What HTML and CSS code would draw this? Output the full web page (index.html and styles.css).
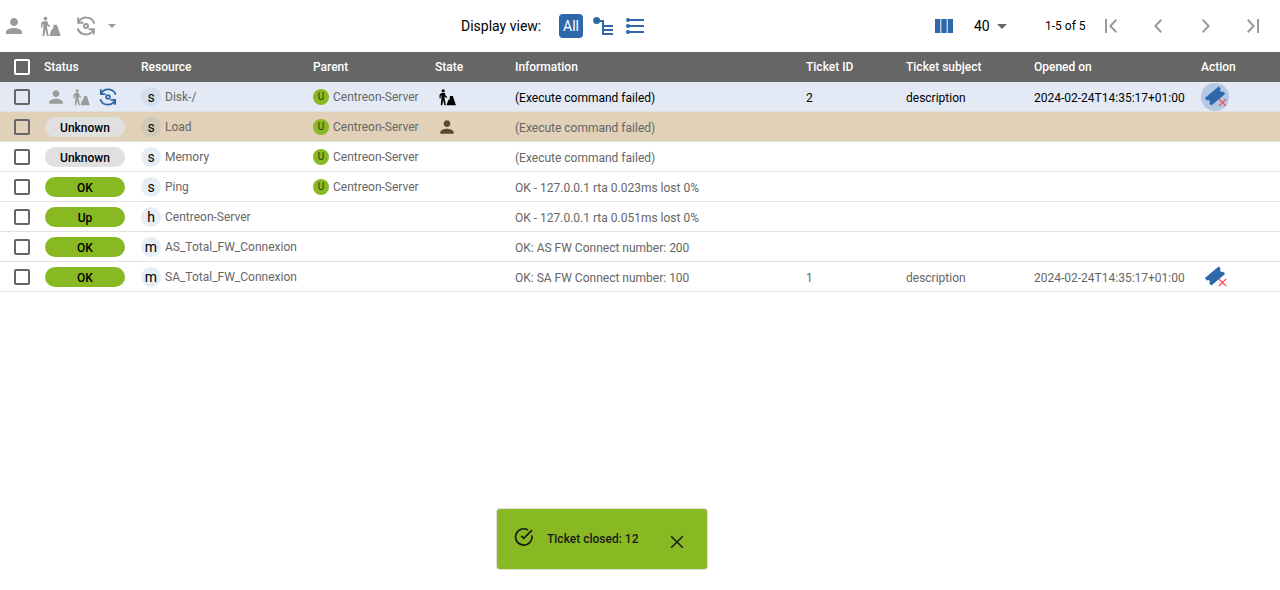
FILE: index.html
```html
<!DOCTYPE html>
<html lang="en">
<head>
    <meta charset="UTF-8">
    <title>Resources status</title>
    <link rel="stylesheet" href="styles.css">
</head>
<body>
    <svg class="defs" width="0" height="0">
        <symbol id="i-person" viewBox="0 0 24 24"><path d="M12 12c2.21 0 4-1.79 4-4s-1.79-4-4-4-4 1.79-4 4 1.79 4 4 4zm0 2c-2.67 0-8 1.34-8 4v2h16v-2c0-2.66-5.33-4-8-4z"/></symbol>
        <symbol id="i-downtime" viewBox="0 0 24 24"><circle cx="7.4" cy="4.6" r="1.9"/><path d="M5 7.2h4.4l1 3.2 2 1.7-.9 1-2.4-1.6v2.2l1.6 8.3H9l-1.6-6.2-1.1 6.2H4.5l.9-9.2V10l-.9.6v3H3V9.3z"/><path d="M15.6 10.8h3.4l3.7 11.2H11.4l2.2-6.4 1.4-.6z"/></symbol>
        <symbol id="i-recheck" viewBox="0 0 24 24"><path class="line" d="M4.2 3.6v5.2h5.2M4.4 8.6A8.6 8.6 0 0 1 20.4 9.6M19.8 20.4v-5.2h-5.2M19.6 15.4A8.6 8.6 0 0 1 3.6 14.4"/><circle class="line" cx="12" cy="12" r="2"/></symbol>
        <symbol id="i-ticket" viewBox="0 0 24 24"><path transform="rotate(-40 12 12)" d="M3 7h18v3.2a1.8 1.8 0 0 0 0 3.6V17H3v-3.2a1.8 1.8 0 0 0 0-3.6z"/></symbol>
        <symbol id="i-cross" viewBox="0 0 10 10"><path d="M1 1l8 8M9 1l-8 8"/></symbol>
    </svg>

    <header class="toolbar">
        <div class="actions">
            <svg class="icon muted"><use href="#i-person"/></svg>
            <svg class="icon muted downtime-btn"><use href="#i-downtime"/></svg>
            <svg class="icon muted recheck-btn"><use href="#i-recheck"/></svg>
            <span class="caret muted-caret"></span>
        </div>
        <div class="views">
            <span class="views-label">Display view:</span>
            <button class="all-btn">All</button>
            <svg class="tree-icon" viewBox="0 0 20 18">
                <circle cx="3.6" cy="3.6" r="3.5"/>
                <path d="M4 3h7v15H9V5H4zM10 8h10v2H10zM10 12h10v2H10zM10 16h10v2H10z"/>
            </svg>
            <svg class="list-icon" viewBox="0 0 18 16">
                <circle cx="2" cy="2" r="2"/><circle cx="2" cy="8" r="2"/><circle cx="2" cy="14" r="2"/>
                <path d="M2 1h16v2H2zM2 7h16v2H2zM2 13h16v2H2z"/>
            </svg>
        </div>
        <div class="paging">
            <svg class="columns-icon" viewBox="0 0 18 14"><path d="M0 0h5.3v14H0zM6.3 0h5.4v14H6.3zM12.7 0H18v14h-5.3z"/></svg>
            <span class="per-page">40</span>
            <span class="caret dark-caret"></span>
            <span class="page-info">1-5 of 5</span>
            <svg class="nav nav-first" viewBox="0 0 14 14"><path d="M1 0h2v14H1zM13 1.4L11.6 0 5 7l6.6 7 1.4-1.4L7.8 7z"/></svg>
            <svg class="nav nav-prev" viewBox="0 0 8 14"><path d="M8 1.4L6.6 0 0 7l6.6 7L8 12.6 2.8 7z"/></svg>
            <svg class="nav nav-next" viewBox="0 0 8 14"><path d="M0 1.4L1.4 0 8 7l-6.6 7L0 12.6 5.2 7z"/></svg>
            <svg class="nav nav-last" viewBox="0 0 14 14"><path d="M11 0h2v14h-2zM1 1.4L2.4 0 9 7l-6.6 7L1 12.6 6.2 7z"/></svg>
        </div>
    </header>

    <div class="table">
        <div class="row head">
            <div class="cell"><span class="check"></span></div>
            <div class="cell">Status</div>
            <div class="cell">Resource</div>
            <div class="cell">Parent</div>
            <div class="cell">State</div>
            <div class="cell">Information</div>
            <div class="cell">Ticket ID</div>
            <div class="cell">Ticket subject</div>
            <div class="cell">Opened on</div>
            <div class="cell">Action</div>
        </div>

        <div class="row hovered">
            <div class="cell"><span class="check"></span></div>
            <div class="cell row-actions">
                <svg class="icon-sm muted"><use href="#i-person"/></svg>
                <svg class="icon-sm muted"><use href="#i-downtime"/></svg>
                <svg class="icon-recheck blue"><use href="#i-recheck"/></svg>
            </div>
            <div class="cell"><span class="avatar">s</span><span class="name">Disk-/</span></div>
            <div class="cell"><span class="dot">U</span><span class="name">Centreon-Server</span></div>
            <div class="cell"><svg class="state-icon dark"><use href="#i-downtime"/></svg></div>
            <div class="cell txt">(Execute command failed)</div>
            <div class="cell txt">2</div>
            <div class="cell txt">description</div>
            <div class="cell txt">2024-02-24T14:35:17+01:00</div>
            <div class="cell"><span class="ticket-btn active"><svg class="ticket"><use href="#i-ticket"/></svg><svg class="cross"><use href="#i-cross"/></svg></span></div>
        </div>

        <div class="row ack">
            <div class="cell"><span class="check"></span></div>
            <div class="cell"><span class="chip unknown">Unknown</span></div>
            <div class="cell"><span class="avatar">s</span><span class="name">Load</span></div>
            <div class="cell"><span class="dot">U</span><span class="name">Centreon-Server</span></div>
            <div class="cell"><svg class="state-icon ack-brown"><use href="#i-person"/></svg></div>
            <div class="cell txt">(Execute command failed)</div>
            <div class="cell"></div><div class="cell"></div><div class="cell"></div><div class="cell"></div>
        </div>

        <div class="row">
            <div class="cell"><span class="check"></span></div>
            <div class="cell"><span class="chip unknown">Unknown</span></div>
            <div class="cell"><span class="avatar">s</span><span class="name">Memory</span></div>
            <div class="cell"><span class="dot">U</span><span class="name">Centreon-Server</span></div>
            <div class="cell"></div>
            <div class="cell txt">(Execute command failed)</div>
            <div class="cell"></div><div class="cell"></div><div class="cell"></div><div class="cell"></div>
        </div>

        <div class="row">
            <div class="cell"><span class="check"></span></div>
            <div class="cell"><span class="chip ok">OK</span></div>
            <div class="cell"><span class="avatar">s</span><span class="name">Ping</span></div>
            <div class="cell"><span class="dot">U</span><span class="name">Centreon-Server</span></div>
            <div class="cell"></div>
            <div class="cell txt">OK - 127.0.0.1 rta 0.023ms lost 0%</div>
            <div class="cell"></div><div class="cell"></div><div class="cell"></div><div class="cell"></div>
        </div>

        <div class="row">
            <div class="cell"><span class="check"></span></div>
            <div class="cell"><span class="chip ok">Up</span></div>
            <div class="cell"><span class="avatar">h</span><span class="name">Centreon-Server</span></div>
            <div class="cell"></div>
            <div class="cell"></div>
            <div class="cell txt">OK - 127.0.0.1 rta 0.051ms lost 0%</div>
            <div class="cell"></div><div class="cell"></div><div class="cell"></div><div class="cell"></div>
        </div>

        <div class="row">
            <div class="cell"><span class="check"></span></div>
            <div class="cell"><span class="chip ok">OK</span></div>
            <div class="cell"><span class="avatar">m</span><span class="name">AS_Total_FW_Connexion</span></div>
            <div class="cell"></div>
            <div class="cell"></div>
            <div class="cell txt">OK: AS FW Connect number: 200</div>
            <div class="cell"></div><div class="cell"></div><div class="cell"></div><div class="cell"></div>
        </div>

        <div class="row">
            <div class="cell"><span class="check"></span></div>
            <div class="cell"><span class="chip ok">OK</span></div>
            <div class="cell"><span class="avatar">m</span><span class="name">SA_Total_FW_Connexion</span></div>
            <div class="cell"></div>
            <div class="cell"></div>
            <div class="cell txt">OK: SA FW Connect number: 100</div>
            <div class="cell txt">1</div>
            <div class="cell txt">description</div>
            <div class="cell txt">2024-02-24T14:35:17+01:00</div>
            <div class="cell"><span class="ticket-btn"><svg class="ticket"><use href="#i-ticket"/></svg><svg class="cross"><use href="#i-cross"/></svg></span></div>
        </div>
    </div>

    <div class="toast">
        <svg class="toast-check" viewBox="0 0 20 20"><path d="M18 3.2L9.8 11.4 7.2 8.8" /><path d="M17.8 8.4a8.2 8.2 0 1 1-3.6-5.3"/></svg>
        <span class="toast-text">Ticket closed: 12</span>
        <svg class="toast-close" viewBox="0 0 12 12"><path d="M1 1l10 10M11 1L1 11"/></svg>
    </div>
</body>
</html>
```

FILE: styles.css
```css
html, body {
    margin: 0;
    height: 100%;
    overflow: hidden;
}
body {
    background: #fff;
    color: #000;
    font-family: Roboto, "Liberation Sans", sans-serif;
    font-size: 12px;
}
.defs {
    position: absolute;
}
svg {
    display: block;
    flex: none;
    fill: currentColor;
}
.line {
    fill: none;
    stroke: currentColor;
    stroke-width: 2;
}

/* toolbar */
.toolbar {
    height: 52px;
    display: flex;
    align-items: center;
}
.actions {
    width: 461px;
    display: flex;
    align-items: center;
    padding-left: 2px;
    box-sizing: border-box;
}
.icon {
    width: 24px;
    height: 24px;
}
.muted {
    color: #9a9a9a;
}
.downtime-btn {
    margin-left: 12px;
}
.recheck-btn {
    margin-left: 12px;
}
.caret {
    width: 0;
    height: 0;
    border-left: 5px solid transparent;
    border-right: 5px solid transparent;
    border-top: 5px solid #9a9a9a;
}
.muted-caret {
    margin-left: 10px;
    border-left-width: 4px;
    border-right-width: 4px;
    border-top-width: 4px;
}
.views {
    width: 474px;
    display: flex;
    align-items: center;
}
.views-label {
    width: 98px;
    font-size: 14px;
}
.all-btn {
    width: 24px;
    height: 24px;
    padding: 0;
    border: 0;
    border-radius: 4px;
    background: #2e68aa;
    color: #fff;
    font-family: inherit;
    font-size: 14px;
}
.tree-icon {
    width: 20px;
    height: 18px;
    margin-left: 10px;
    color: #2e68aa;
}
.list-icon {
    width: 18px;
    height: 16px;
    margin-left: 13px;
    color: #2e68aa;
}
.paging {
    display: flex;
    align-items: center;
}
.columns-icon {
    width: 18px;
    height: 14px;
    color: #2e68aa;
}
.per-page {
    margin-left: 21px;
    width: 23px;
    font-size: 14px;
}
.dark-caret {
    border-top-color: #666;
}
.page-info {
    margin-left: 38px;
    width: 58px;
}
.nav {
    width: 8px;
    height: 14px;
    color: #9a9a9a;
}
.nav-first, .nav-last {
    width: 14px;
}
.nav-first {
    margin-left: 1px;
}
.nav-prev {
    margin-left: 36px;
}
.nav-next {
    margin-left: 40px;
}
.nav-last {
    margin-left: 36px;
}

/* table */
.row {
    display: grid;
    grid-template-columns: 44px 97px 172px 122px 80px 291px 100px 128px 167px 79px;
    height: 30px;
    box-sizing: border-box;
    border-bottom: 1px solid #e0e0e0;
    color: #666;
}
.cell {
    display: flex;
    align-items: center;
    white-space: nowrap;
    min-width: 0;
}
.txt {
    padding-top: 2px;
}
.head {
    background: #666;
    color: #fff;
    font-weight: 500;
    border-bottom: 0;
}
.hovered {
    background: #e3eaf5;
    color: #000;
}
.hovered .name {
    color: #666;
}
.ack {
    background: #e0d1b8;
}
.check {
    width: 12px;
    height: 12px;
    margin-left: 14px;
    border: 2px solid #666;
    border-radius: 2px;
}
.head .check {
    border-color: #fff;
}
.row-actions {
    padding-left: 2px;
}
.icon-sm {
    width: 20px;
    height: 20px;
    margin-right: 5px;
}
.icon-recheck {
    width: 22px;
    height: 22px;
    margin-left: 1px;
}
.blue {
    color: #2e68aa;
}
.chip {
    width: 80px;
    height: 20px;
    margin-left: 1px;
    padding-top: 2px;
    box-sizing: border-box;
    border-radius: 10px;
    display: flex;
    align-items: center;
    justify-content: center;
    color: #000;
    font-weight: 500;
}
.unknown {
    background: #e0e0e0;
}
.ok {
    background: #88b922;
}
.avatar {
    width: 20px;
    height: 20px;
    padding-top: 1px;
    box-sizing: border-box;
    border-radius: 50%;
    background: #e7edf5;
    color: #000;
    display: flex;
    align-items: center;
    justify-content: center;
    font-size: 14px;
    flex: none;
}
.hovered .avatar {
    background: #d3dfee;
}
.ack .avatar {
    background: #cfc9b9;
}
.name {
    margin-left: 4px;
}
.dot {
    width: 16px;
    height: 16px;
    border-radius: 50%;
    background: #88b922;
    color: #2e3a10;
    font-size: 10px;
    display: flex;
    align-items: center;
    justify-content: center;
    flex: none;
}
.state-icon {
    width: 20px;
    height: 20px;
    margin-left: 2px;
}
.dark {
    color: #000;
}
.ack-brown {
    color: #5c4a2a;
}
.ticket-btn {
    position: relative;
    width: 28px;
    height: 28px;
    border-radius: 50%;
    display: flex;
    align-items: center;
    justify-content: center;
    color: #2e68aa;
}
.ticket-btn.active {
    background: #b3c8e2;
}
.ticket {
    width: 24px;
    height: 24px;
    margin: -1px 1px 0 0;
}
.cross {
    position: absolute;
    left: 17px;
    top: 15px;
    width: 9px;
    height: 9px;
    fill: none;
    stroke: #f7525f;
    stroke-width: 1.5;
}

/* snackbar */
.toast {
    position: absolute;
    left: 497px;
    top: 509px;
    width: 210px;
    height: 60px;
    box-sizing: border-box;
    background: #88b922;
    border-radius: 3px;
    box-shadow: 0 0 0 1px rgba(0, 0, 0, 0.12);
    display: flex;
    align-items: center;
    font-weight: 500;
    color: #1a1a1a;
}
.toast-check {
    width: 20px;
    height: 20px;
    margin: -4px 0 0 17px;
    fill: none;
    stroke: #1a1a1a;
    stroke-width: 1.7;
}
.toast-text {
    margin-left: 13px;
    width: 123px;
}
.toast-close {
    width: 14px;
    height: 14px;
    margin-top: 5px;
    fill: none;
    stroke: #1a1a1a;
    stroke-width: 1.3;
}
```
